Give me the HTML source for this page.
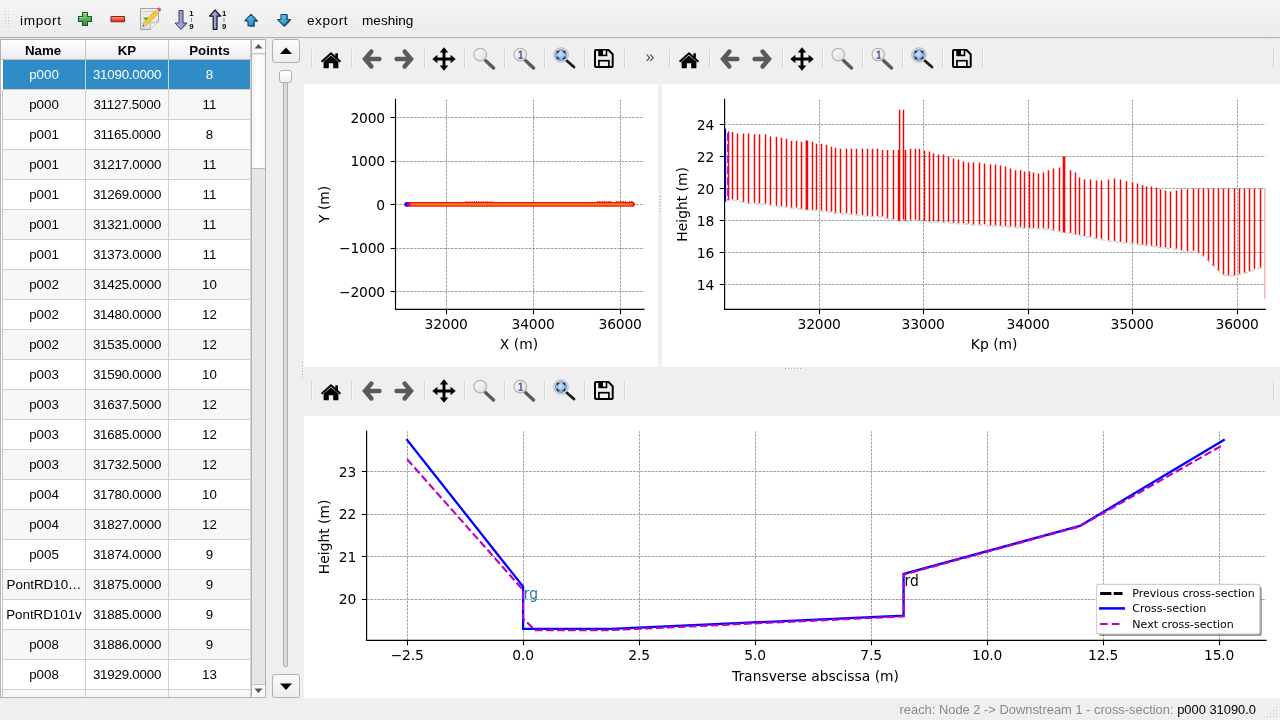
<!DOCTYPE html>
<html lang="en"><head><meta charset="utf-8"><title>Pamhyr2 - Geometry</title>
<style>
*{box-sizing:border-box;margin:0;padding:0}
html,body{width:1280px;height:720px;overflow:hidden;background:#efefef;font-family:"Liberation Sans",sans-serif;font-size:13.33px;color:#000}
body{position:relative;will-change:transform}
.abs{position:absolute}
.topbar{position:absolute;left:0;top:0;width:1280px;height:38px;background:linear-gradient(#f5f5f5,#ececec);border-bottom:1px solid #b4b4b4}
.topline{position:absolute;left:0;top:38px;width:1280px;height:1px;background:#e4e4e4}
.topbar .lbl{position:absolute;top:1px;height:38px;line-height:40px;font-size:13.6px;letter-spacing:.3px;white-space:nowrap}
.tablewrap{position:absolute;left:0;top:39px;width:252px;height:659px;background:#fff;border:1px solid #b4b4b4;overflow:hidden}
.thead{position:absolute;left:0;top:0;width:250px;height:20px;background:linear-gradient(#ffffff,#ececec);border-bottom:1px solid #c0c0c0}
.th{position:absolute;top:0;height:19px;line-height:22px;text-align:center;font-weight:bold;font-size:13.3px;border-right:1px solid #c8c8c8}
.tr{position:absolute;left:2px;width:248px;height:30px;background:#fff;border-bottom:1px solid #d0d0d0}
.tr.alt{background:#f7f7f7}
.tr.sel{background:#308cc6;color:#fff}
.td{position:absolute;top:0;height:29px;line-height:30px;text-align:center;white-space:nowrap;border-right:1px solid #d0d0d0}
.c1{left:0;width:83px}.c2{left:83px;width:83px}.c3{left:166px;width:82px}
.status{position:absolute;left:0;top:699px;width:1256px;height:22px;line-height:22px;text-align:right;white-space:nowrap;font-size:12.9px}
.status .s1{color:#8a8a8a}
.canvas{position:absolute;background:#fff}
svg text{font-family:"DejaVu Sans",sans-serif;font-size:13.89px;fill:#000}
svg text.tk{letter-spacing:-.2px}
.leftline{position:absolute;left:1px;top:50px;width:1px;height:610px;background:#c6c6c6}
.td.c2{letter-spacing:-.22px}

</style></head>
<body>
<div class="topbar">
<svg class="abs" style="left:3px;top:9px" width="8" height="20" viewBox="0 0 8 20"><g fill="#c4c4c4"><rect x="2" y="2" width="1" height="1"/><rect x="5" y="2" width="1" height="1"/><rect x="2" y="5" width="1" height="1"/><rect x="5" y="5" width="1" height="1"/><rect x="2" y="8" width="1" height="1"/><rect x="5" y="8" width="1" height="1"/><rect x="2" y="11" width="1" height="1"/><rect x="5" y="11" width="1" height="1"/><rect x="2" y="14" width="1" height="1"/><rect x="5" y="14" width="1" height="1"/><rect x="2" y="17" width="1" height="1"/><rect x="5" y="17" width="1" height="1"/></g></svg>
<div class="lbl" style="left:20px;letter-spacing:.65px">import</div>
<!-- plus -->
<svg class="abs" style="left:77px;top:11px" width="16" height="16" viewBox="0 0 16 16"><defs><linearGradient id="gp" x1="0" y1="0" x2="0" y2="1"><stop offset="0" stop-color="#8fd08f"/><stop offset="1" stop-color="#2f8a36"/></linearGradient></defs><path d="M5.500 1.500h5V5.500h4v5h-4v4h-5v-4h-4v-5h4z" fill="url(#gp)" stroke="#1f5a24" stroke-width="1.100" stroke-linejoin="round"/><path d="M6.600 2.600h2.800M2.600 6.600h2.900" stroke="#c8ecc8" stroke-width="1" fill="none" opacity=".8"/></svg>
<!-- minus -->
<svg class="abs" style="left:110px;top:15px" width="16" height="8" viewBox="0 0 16 8"><defs><linearGradient id="gm" x1="0" y1="0" x2="0" y2="1"><stop offset="0" stop-color="#ff9a7a"/><stop offset="1" stop-color="#e8201a"/></linearGradient></defs><rect x="1" y="1.500" width="13.500" height="5.200" rx=".500" fill="url(#gm)" stroke="#7a2a22" stroke-width="1.100"/></svg>
<!-- edit -->
<svg class="abs" style="left:139px;top:6px" width="24" height="25" viewBox="0 0 24 25"><defs><linearGradient id="gpap" x1="0" y1="0" x2="0" y2="1"><stop offset="0" stop-color="#f4f4f4"/><stop offset="1" stop-color="#dcdcdc"/></linearGradient></defs><path d="M1.500 2.500h18v13l-8.500 8h-9.500z" fill="url(#gpap)" stroke="#a2a2a2" stroke-width="1"/><path d="M11 23.500c1-2.500 1-5 .3-7.200c2.500 1 5.500.8 8.200-.8" fill="#fbfbfb" stroke="#a8a8a8" stroke-width=".8"/><rect x="3.500" y="4.600" width="12" height="1.800" fill="#f1cabb"/><rect x="3.500" y="8" width="13" height="1.200" fill="#e2e2e2"/><path d="M4 11.500h5l-1 4z" fill="#4c9a3c"/><rect x="3.500" y="16.500" width="6" height="1.200" fill="#d4d4d4"/><path d="M3.600 20.400l1.500-4.300L16.700 4.400l2.700 2.700L7.800 18.800z" fill="#f3cf2c" stroke="#c49a14" stroke-width=".7"/><path d="M16.700 4.400l1.200-1.200 2.700 2.700-1.200 1.200z" fill="#d8d8d8"/><path d="M3.600 20.400l1.500-4.300 2.700 2.700z" fill="#e9c9a4"/><path d="M3.600 20.400l.6-1.700 1.100 1.100z" fill="#444"/><path d="M17.900 3.200l.9-.9a1.900 1.900 0 0 1 2.700 2.700l-.9.900z" fill="#ec5050"/></svg>
<!-- sort desc -->
<svg class="abs" style="left:173px;top:8px" width="24" height="24" viewBox="0 0 24 24"><defs><linearGradient id="gs" x1="0" y1="0" x2="1" y2="0"><stop offset="0" stop-color="#b8bce4"/><stop offset="1" stop-color="#7c82c0"/></linearGradient></defs><path d="M6 2.500h4v12.500h4l-6 6.500-6-6.500h4z" fill="url(#gs)" stroke="#3c3e5c" stroke-width="1" stroke-linejoin="round"/><text x="16.300" y="7.900" style="font:bold 7.8px 'Liberation Sans',sans-serif" fill="#111">1</text><rect x="18" y="10.500" width="1" height="1" fill="#222"/><rect x="18" y="12.500" width="1" height="1" fill="#222"/><text x="16.300" y="21" style="font:bold 7.8px 'Liberation Sans',sans-serif" fill="#111">9</text></svg>
<!-- sort asc -->
<svg class="abs" style="left:207px;top:8px" width="24" height="24" viewBox="0 0 24 24"><path d="M6.200 21.300h3.800V8.200h3.600L8.100 2 2.600 8.200h3.600z" fill="url(#gs)" stroke="#14162c" stroke-width="1.200" stroke-linejoin="round"/><text x="14.900" y="7.900" style="font:bold 7.800px 'Liberation Sans',sans-serif" fill="#111">1</text><rect x="16.500" y="10.500" width="1" height="1" fill="#222"/><rect x="16.500" y="12.500" width="1" height="1" fill="#222"/><text x="14.900" y="21" style="font:bold 7.800px 'Liberation Sans',sans-serif" fill="#111">9</text></svg>
<!-- up -->
<svg class="abs" style="left:243px;top:12px" width="17" height="16" viewBox="0 0 17 16"><defs><linearGradient id="gu" x1="0" y1="0" x2="1" y2="1"><stop offset="0" stop-color="#7fd4f4"/><stop offset="1" stop-color="#1478b8"/></linearGradient></defs><path d="M9 3.300l6.500 6.700H12v5H6v-5H2.500z" fill="#222" opacity=".55"/><path d="M8 2.300l6.300 6.500H11v5H5v-5H1.700z" fill="url(#gu)" stroke="#0c4a78" stroke-width="1.100" stroke-linejoin="round"/></svg>
<!-- down -->
<svg class="abs" style="left:276px;top:12px" width="17" height="16" viewBox="0 0 17 16"><path d="M9 15l6.500-6.700H12v-5H6v5H2.500z" fill="#222" opacity=".55"/><path d="M8 14l6.300-6.500H11v-5H5v5H1.700z" fill="url(#gu)" stroke="#0c4a78" stroke-width="1.100" stroke-linejoin="round"/></svg>
<div class="lbl" style="left:307px;letter-spacing:.55px">export</div>
<div class="lbl" style="left:362px;letter-spacing:0">meshing</div>
</div>
<div class="topline"></div>
<div class="tablewrap">
<div class="thead"><div class="th" style="left:0;width:85px">Name</div><div class="th" style="left:85px;width:83px">KP</div><div class="th" style="left:168px;width:82px">Points</div></div>
<div class="tr sel" style="top:20px"><div class="td c1">p000</div><div class="td c2">31090.0000</div><div class="td c3">8</div></div>
<div class="tr alt" style="top:50px"><div class="td c1">p000</div><div class="td c2">31127.5000</div><div class="td c3">11</div></div>
<div class="tr" style="top:80px"><div class="td c1">p001</div><div class="td c2">31165.0000</div><div class="td c3">8</div></div>
<div class="tr alt" style="top:110px"><div class="td c1">p001</div><div class="td c2">31217.0000</div><div class="td c3">11</div></div>
<div class="tr" style="top:140px"><div class="td c1">p001</div><div class="td c2">31269.0000</div><div class="td c3">11</div></div>
<div class="tr alt" style="top:170px"><div class="td c1">p001</div><div class="td c2">31321.0000</div><div class="td c3">11</div></div>
<div class="tr" style="top:200px"><div class="td c1">p001</div><div class="td c2">31373.0000</div><div class="td c3">11</div></div>
<div class="tr alt" style="top:230px"><div class="td c1">p002</div><div class="td c2">31425.0000</div><div class="td c3">10</div></div>
<div class="tr" style="top:260px"><div class="td c1">p002</div><div class="td c2">31480.0000</div><div class="td c3">12</div></div>
<div class="tr alt" style="top:290px"><div class="td c1">p002</div><div class="td c2">31535.0000</div><div class="td c3">12</div></div>
<div class="tr" style="top:320px"><div class="td c1">p003</div><div class="td c2">31590.0000</div><div class="td c3">10</div></div>
<div class="tr alt" style="top:350px"><div class="td c1">p003</div><div class="td c2">31637.5000</div><div class="td c3">12</div></div>
<div class="tr" style="top:380px"><div class="td c1">p003</div><div class="td c2">31685.0000</div><div class="td c3">12</div></div>
<div class="tr alt" style="top:410px"><div class="td c1">p003</div><div class="td c2">31732.5000</div><div class="td c3">12</div></div>
<div class="tr" style="top:440px"><div class="td c1">p004</div><div class="td c2">31780.0000</div><div class="td c3">10</div></div>
<div class="tr alt" style="top:470px"><div class="td c1">p004</div><div class="td c2">31827.0000</div><div class="td c3">12</div></div>
<div class="tr" style="top:500px"><div class="td c1">p005</div><div class="td c2">31874.0000</div><div class="td c3">9</div></div>
<div class="tr alt" style="top:530px"><div class="td c1">PontRD10…</div><div class="td c2">31875.0000</div><div class="td c3">9</div></div>
<div class="tr" style="top:560px"><div class="td c1">PontRD101v</div><div class="td c2">31885.0000</div><div class="td c3">9</div></div>
<div class="tr alt" style="top:590px"><div class="td c1">p008</div><div class="td c2">31886.0000</div><div class="td c3">9</div></div>
<div class="tr" style="top:620px"><div class="td c1">p008</div><div class="td c2">31929.0000</div><div class="td c3">13</div></div>
<div class="tr alt" style="top:650px"><div class="td c1">p009</div><div class="td c2">31972.0000</div><div class="td c3">13</div></div>
<div class="leftline"></div>
</div>
<svg width="0" height="0" style="position:absolute"><defs>
<linearGradient id="lens" x1="0" y1="0" x2="1" y2="1"><stop offset="0" stop-color="#ffffff"/><stop offset="1" stop-color="#dcdcdc"/></linearGradient>
<linearGradient id="hnd" x1="0" y1="0" x2="1" y2="0"><stop offset="0" stop-color="#8a8a8a"/><stop offset="1" stop-color="#3a3a3a"/></linearGradient>
<radialGradient id="lensb" cx=".45" cy=".4" r=".7"><stop offset="0" stop-color="#cfe2f6"/><stop offset="1" stop-color="#6f9fd8"/></radialGradient>
<symbol id="i-home" viewBox="0 0 24 24"><path d="M12 7.600l7.400 6.200V20.200H14.200V15.300H9.800V20.200H4.600V13.800z" fill="#000"/><path d="M2.600 13.800L12 5.300l9.400 8.500" fill="none" stroke="#000" stroke-width="2.100" stroke-linejoin="miter"/><rect x="16.300" y="5.300" width="2.600" height="5.500" fill="#000"/></symbol>
<symbol id="i-back" viewBox="0 0 24 24"><path d="M11.400 4.500L5 12l6.400 7.500M6 12H19.400" fill="none" stroke="#5a5a5a" stroke-width="4.400" stroke-linecap="round" stroke-linejoin="miter"/></symbol>
<symbol id="i-fwd" viewBox="0 0 24 24"><path d="M12.600 4.500L19 12l-6.400 7.500M18 12H4.600" fill="none" stroke="#5a5a5a" stroke-width="4.400" stroke-linecap="round" stroke-linejoin="miter"/></symbol>
<symbol id="i-move" viewBox="0 0 24 24"><path d="M12 2.500V21.500M2.500 12H21.500" stroke="#000" stroke-width="2.900" fill="none"/><path d="M12 .300l4.300 5.100H7.700zM12 23.700l4.300-5.100H7.700zM.300 12l5.100-4.300v8.600zM23.700 12l-5.100-4.300v8.600z" fill="#000"/></symbol>
<symbol id="i-zoom" viewBox="0 0 24 24"><path d="M13.500 13.500L21.500 21" stroke="#4c4c4c" stroke-width="3.400" stroke-linecap="round" opacity=".9"/><circle cx="8.300" cy="7.600" r="6.300" fill="url(#lens)" stroke="#b4b4b4" stroke-width="1.300"/></symbol>
<symbol id="i-zoom1" viewBox="0 0 24 24"><path d="M13.500 13.500L21.500 21" stroke="#4c4c4c" stroke-width="3.400" stroke-linecap="round" opacity=".9"/><circle cx="8.300" cy="7.600" r="6.300" fill="url(#lens)" stroke="#b4b4b4" stroke-width="1.300"/><path d="M6.600 5.300l2.400-.9v6.700M6.600 11.200h4" stroke="#5c5ca8" stroke-width="1.500" fill="none"/></symbol>
<symbol id="i-zoomf" viewBox="0 0 24 24"><path d="M14.500 13.500L22 20" stroke="#1a1a1a" stroke-width="2.800" stroke-linecap="round"/><circle cx="9" cy="8" r="7.200" fill="#f4f4f4" stroke="#b0b0b0" stroke-width="1"/><circle cx="9" cy="8" r="5.600" fill="url(#lensb)" stroke="#5c8cd0" stroke-width=".8"/><path d="M5.300 6.600V4.400h2.200M10.500 4.400h2.200v2.200M12.700 9.400v2.200h-2.200M7.500 11.600H5.300V9.400" stroke="#2c3c5c" stroke-width="1.500" fill="none"/></symbol>
<symbol id="i-save" viewBox="0 0 24 24"><path d="M3 4a1 1 0 0 1 1-1H16.500l4.200 4.200V19a1 1 0 0 1-1 1H4a1 1 0 0 1-1-1z" fill="none" stroke="#000" stroke-width="2" stroke-linejoin="round"/><path d="M6.300 2.600h9v6.600h-9z" fill="#000"/><rect x="11" y="3.500" width="2.700" height="4.100" fill="#efefef"/><rect x="6.900" y="13.700" width="10" height="6.300" fill="none" stroke="#000" stroke-width="1.700"/></symbol>
</defs></svg>
<div class="abs" style="left:251px;top:39px;width:15px;height:659px;background:#e6e6e6;border:1px solid #b4b4b4"></div>
<div class="abs" style="left:252px;top:40px;width:13px;height:14px;background:#fafafa;border-bottom:1px solid #c4c4c4"></div>
<svg class="abs" style="left:254px;top:43px" width="9" height="6" viewBox="0 0 9 6"><path d="M0.500 5.500L4.500 1l4 4.500z" fill="#555"/></svg>
<div class="abs" style="left:252px;top:55px;width:13px;height:114px;background:linear-gradient(90deg,#f2f2f2,#ffffff 40%,#f6f6f6);border-bottom:1px solid #b8b8b8"></div>
<div class="abs" style="left:252px;top:684px;width:13px;height:13px;background:#fafafa;border-top:1px solid #c4c4c4"></div>
<svg class="abs" style="left:254px;top:688px" width="9" height="6" viewBox="0 0 9 6"><path d="M0.500 .500L4.500 5l4-4.500z" fill="#555"/></svg>
<div class="abs" style="left:272px;top:39px;width:28px;height:24px;border:1px solid #b2b2b2;border-radius:3px;background:linear-gradient(#fbfbfb,#ececec)"></div>
<svg class="abs" style="left:280px;top:47px" width="12" height="8" viewBox="0 0 12 8"><path d="M0 7L6 .500 12 7z" fill="#000"/></svg>
<div class="abs" style="left:283px;top:76px;width:5px;height:591px;border:1px solid #b0b0b0;border-radius:2px;background:#dadada"></div>
<div class="abs" style="left:279px;top:70px;width:13px;height:13px;border:1px solid #b0b0b0;border-radius:3px;background:linear-gradient(#ffffff,#f0f0f0)"></div>
<div class="abs" style="left:272px;top:674px;width:28px;height:24px;border:1px solid #b2b2b2;border-radius:3px;background:linear-gradient(#fbfbfb,#ececec)"></div>
<svg class="abs" style="left:280px;top:683px" width="12" height="8" viewBox="0 0 12 8"><path d="M0 .500L6 7 12 .500z" fill="#000"/></svg>
<svg class="abs" style="left:0;top:0;pointer-events:none" width="1280" height="720" viewBox="0 0 1280 720" shape-rendering="crispEdges"><rect x="303" y="363" width="1" height="1" fill="#fbfbfb"/><rect x="302" y="362" width="1" height="1" fill="#aeaeae"/><rect x="303" y="366" width="1" height="1" fill="#fbfbfb"/><rect x="302" y="365" width="1" height="1" fill="#aeaeae"/><rect x="303" y="369" width="1" height="1" fill="#fbfbfb"/><rect x="302" y="368" width="1" height="1" fill="#aeaeae"/><rect x="303" y="372" width="1" height="1" fill="#fbfbfb"/><rect x="302" y="371" width="1" height="1" fill="#aeaeae"/><rect x="303" y="375" width="1" height="1" fill="#fbfbfb"/><rect x="302" y="374" width="1" height="1" fill="#aeaeae"/><rect x="303" y="378" width="1" height="1" fill="#fbfbfb"/><rect x="302" y="377" width="1" height="1" fill="#aeaeae"/><rect x="661" y="197" width="1" height="1" fill="#fbfbfb"/><rect x="660" y="196" width="1" height="1" fill="#aeaeae"/><rect x="661" y="200" width="1" height="1" fill="#fbfbfb"/><rect x="660" y="199" width="1" height="1" fill="#aeaeae"/><rect x="661" y="203" width="1" height="1" fill="#fbfbfb"/><rect x="660" y="202" width="1" height="1" fill="#aeaeae"/><rect x="661" y="206" width="1" height="1" fill="#fbfbfb"/><rect x="660" y="205" width="1" height="1" fill="#aeaeae"/><rect x="661" y="209" width="1" height="1" fill="#fbfbfb"/><rect x="660" y="208" width="1" height="1" fill="#aeaeae"/><rect x="661" y="212" width="1" height="1" fill="#fbfbfb"/><rect x="660" y="211" width="1" height="1" fill="#aeaeae"/><rect x="786" y="369" width="1" height="1" fill="#fbfbfb"/><rect x="785" y="368" width="1" height="1" fill="#aeaeae"/><rect x="789" y="369" width="1" height="1" fill="#fbfbfb"/><rect x="788" y="368" width="1" height="1" fill="#aeaeae"/><rect x="792" y="369" width="1" height="1" fill="#fbfbfb"/><rect x="791" y="368" width="1" height="1" fill="#aeaeae"/><rect x="795" y="369" width="1" height="1" fill="#fbfbfb"/><rect x="794" y="368" width="1" height="1" fill="#aeaeae"/><rect x="798" y="369" width="1" height="1" fill="#fbfbfb"/><rect x="797" y="368" width="1" height="1" fill="#aeaeae"/><rect x="801" y="369" width="1" height="1" fill="#fbfbfb"/><rect x="800" y="368" width="1" height="1" fill="#aeaeae"/></svg>
<div class="abs" style="left:311px;top:49px;width:1px;height:19px;background:#d6d6d6"></div><div class="abs" style="left:312px;top:49px;width:1px;height:19px;background:#f8f8f8"></div>
<div class="abs" style="left:351px;top:49px;width:1px;height:19px;background:#d6d6d6"></div><div class="abs" style="left:352px;top:49px;width:1px;height:19px;background:#f8f8f8"></div>
<div class="abs" style="left:424px;top:49px;width:1px;height:19px;background:#d6d6d6"></div><div class="abs" style="left:425px;top:49px;width:1px;height:19px;background:#f8f8f8"></div>
<div class="abs" style="left:464px;top:49px;width:1px;height:19px;background:#d6d6d6"></div><div class="abs" style="left:465px;top:49px;width:1px;height:19px;background:#f8f8f8"></div>
<div class="abs" style="left:504px;top:49px;width:1px;height:19px;background:#d6d6d6"></div><div class="abs" style="left:505px;top:49px;width:1px;height:19px;background:#f8f8f8"></div>
<div class="abs" style="left:544px;top:49px;width:1px;height:19px;background:#d6d6d6"></div><div class="abs" style="left:545px;top:49px;width:1px;height:19px;background:#f8f8f8"></div>
<div class="abs" style="left:584px;top:49px;width:1px;height:19px;background:#d6d6d6"></div><div class="abs" style="left:585px;top:49px;width:1px;height:19px;background:#f8f8f8"></div>
<div class="abs" style="left:624px;top:49px;width:1px;height:19px;background:#d6d6d6"></div><div class="abs" style="left:625px;top:49px;width:1px;height:19px;background:#f8f8f8"></div>
<svg class="abs" style="left:319.2px;top:47.7px" width="24" height="24"><use href="#i-home"/></svg>
<svg class="abs" style="left:359.5px;top:47px" width="24" height="24"><use href="#i-back"/></svg>
<svg class="abs" style="left:391.5px;top:47px" width="24" height="24"><use href="#i-fwd"/></svg>
<svg class="abs" style="left:432px;top:47px" width="24" height="24"><use href="#i-move"/></svg>
<svg class="abs" style="left:472px;top:47px" width="24" height="24"><use href="#i-zoom"/></svg>
<svg class="abs" style="left:512px;top:47px" width="24" height="24"><use href="#i-zoom1"/></svg>
<svg class="abs" style="left:552px;top:47px" width="24" height="24"><use href="#i-zoomf"/></svg>
<svg class="abs" style="left:592px;top:47px" width="24" height="24"><use href="#i-save"/></svg>
<div class="abs" style="left:642px;top:48.3px;width:16px;height:18px;line-height:18px;font-size:16px;color:#505050;text-align:center">»</div>
<div class="abs" style="left:669px;top:49px;width:1px;height:19px;background:#d6d6d6"></div><div class="abs" style="left:670px;top:49px;width:1px;height:19px;background:#f8f8f8"></div>
<div class="abs" style="left:709px;top:49px;width:1px;height:19px;background:#d6d6d6"></div><div class="abs" style="left:710px;top:49px;width:1px;height:19px;background:#f8f8f8"></div>
<div class="abs" style="left:782px;top:49px;width:1px;height:19px;background:#d6d6d6"></div><div class="abs" style="left:783px;top:49px;width:1px;height:19px;background:#f8f8f8"></div>
<div class="abs" style="left:822px;top:49px;width:1px;height:19px;background:#d6d6d6"></div><div class="abs" style="left:823px;top:49px;width:1px;height:19px;background:#f8f8f8"></div>
<div class="abs" style="left:862px;top:49px;width:1px;height:19px;background:#d6d6d6"></div><div class="abs" style="left:863px;top:49px;width:1px;height:19px;background:#f8f8f8"></div>
<div class="abs" style="left:902px;top:49px;width:1px;height:19px;background:#d6d6d6"></div><div class="abs" style="left:903px;top:49px;width:1px;height:19px;background:#f8f8f8"></div>
<div class="abs" style="left:942px;top:49px;width:1px;height:19px;background:#d6d6d6"></div><div class="abs" style="left:943px;top:49px;width:1px;height:19px;background:#f8f8f8"></div>
<div class="abs" style="left:982px;top:49px;width:1px;height:19px;background:#d6d6d6"></div><div class="abs" style="left:983px;top:49px;width:1px;height:19px;background:#f8f8f8"></div>
<div class="abs" style="left:1273px;top:49px;width:1px;height:19px;background:#d6d6d6"></div><div class="abs" style="left:1274px;top:49px;width:1px;height:19px;background:#f8f8f8"></div>
<svg class="abs" style="left:677.2px;top:47.7px" width="24" height="24"><use href="#i-home"/></svg>
<svg class="abs" style="left:717.5px;top:47px" width="24" height="24"><use href="#i-back"/></svg>
<svg class="abs" style="left:749.5px;top:47px" width="24" height="24"><use href="#i-fwd"/></svg>
<svg class="abs" style="left:790px;top:47px" width="24" height="24"><use href="#i-move"/></svg>
<svg class="abs" style="left:830px;top:47px" width="24" height="24"><use href="#i-zoom"/></svg>
<svg class="abs" style="left:870px;top:47px" width="24" height="24"><use href="#i-zoom1"/></svg>
<svg class="abs" style="left:910px;top:47px" width="24" height="24"><use href="#i-zoomf"/></svg>
<svg class="abs" style="left:950px;top:47px" width="24" height="24"><use href="#i-save"/></svg>
<div class="abs" style="left:311px;top:381px;width:1px;height:19px;background:#d6d6d6"></div><div class="abs" style="left:312px;top:381px;width:1px;height:19px;background:#f8f8f8"></div>
<div class="abs" style="left:351px;top:381px;width:1px;height:19px;background:#d6d6d6"></div><div class="abs" style="left:352px;top:381px;width:1px;height:19px;background:#f8f8f8"></div>
<div class="abs" style="left:424px;top:381px;width:1px;height:19px;background:#d6d6d6"></div><div class="abs" style="left:425px;top:381px;width:1px;height:19px;background:#f8f8f8"></div>
<div class="abs" style="left:464px;top:381px;width:1px;height:19px;background:#d6d6d6"></div><div class="abs" style="left:465px;top:381px;width:1px;height:19px;background:#f8f8f8"></div>
<div class="abs" style="left:504px;top:381px;width:1px;height:19px;background:#d6d6d6"></div><div class="abs" style="left:505px;top:381px;width:1px;height:19px;background:#f8f8f8"></div>
<div class="abs" style="left:544px;top:381px;width:1px;height:19px;background:#d6d6d6"></div><div class="abs" style="left:545px;top:381px;width:1px;height:19px;background:#f8f8f8"></div>
<div class="abs" style="left:584px;top:381px;width:1px;height:19px;background:#d6d6d6"></div><div class="abs" style="left:585px;top:381px;width:1px;height:19px;background:#f8f8f8"></div>
<div class="abs" style="left:624px;top:381px;width:1px;height:19px;background:#d6d6d6"></div><div class="abs" style="left:625px;top:381px;width:1px;height:19px;background:#f8f8f8"></div>
<div class="abs" style="left:1273px;top:381px;width:1px;height:19px;background:#d6d6d6"></div><div class="abs" style="left:1274px;top:381px;width:1px;height:19px;background:#f8f8f8"></div>
<svg class="abs" style="left:319.2px;top:379.7px" width="24" height="24"><use href="#i-home"/></svg>
<svg class="abs" style="left:359.5px;top:379px" width="24" height="24"><use href="#i-back"/></svg>
<svg class="abs" style="left:391.5px;top:379px" width="24" height="24"><use href="#i-fwd"/></svg>
<svg class="abs" style="left:432px;top:379px" width="24" height="24"><use href="#i-move"/></svg>
<svg class="abs" style="left:472px;top:379px" width="24" height="24"><use href="#i-zoom"/></svg>
<svg class="abs" style="left:512px;top:379px" width="24" height="24"><use href="#i-zoom1"/></svg>
<svg class="abs" style="left:552px;top:379px" width="24" height="24"><use href="#i-zoomf"/></svg>
<svg class="abs" style="left:592px;top:379px" width="24" height="24"><use href="#i-save"/></svg>
<svg class="canvas" style="left:304px;top:84px" width="354" height="283" viewBox="304 84 354 283">
<path d="M446.5 309.3V99.4M533.5 309.3V99.4M620.5 309.3V99.4M395.5 117.5H644M395.5 161.5H644M395.5 204.5H644M395.5 248.5H644M395.5 291.5H644" fill="none" stroke="#808080" stroke-width=".75" stroke-dasharray="2.6 1.1"/>
<path d="M408 204.400H632.600" stroke="#ff0000" stroke-width="4.700" stroke-linecap="round" fill="none"/>
<path d="M465 201.800H493M597 201.600H612M616 201.600H626M629 201.700H633" stroke="#ff0000" stroke-width="1.200" stroke-dasharray="1.300 .900" fill="none"/>
<path d="M408 201.950H632M408 206.850H632" stroke="#fff" stroke-width=".500" stroke-dasharray=".700 .900" opacity=".55" fill="none"/>
<circle cx="406.600" cy="204.400" r="2.300" fill="#0000ff"/>
<circle cx="408.900" cy="204.400" r="2" fill="#bf00bf"/>
<path d="M410.800 204.400H632.800" stroke="#ee8a1e" stroke-width="2.400" fill="none"/>
<path d="M446.5 309.3v4.9M533.5 309.3v4.9M620.5 309.3v4.9M395.5 117.5h-4.9M395.5 161.5h-4.9M395.5 204.5h-4.9M395.5 248.5h-4.9M395.5 291.5h-4.9" stroke="#000" stroke-width="1.1" fill="none"/>
<path d="M395.5 99.4V309.3H644" stroke="#000" stroke-width="1.15" fill="none" stroke-linecap="square"/>
<text class="tk" x="446.1" y="328.6" text-anchor="middle">32000</text>
<text class="tk" x="533.1" y="328.6" text-anchor="middle">34000</text>
<text class="tk" x="620.1" y="328.6" text-anchor="middle">36000</text>
<text class="tk" x="385" y="122.7" text-anchor="end">2000</text>
<text class="tk" x="385" y="165.9" text-anchor="end">1000</text>
<text class="tk" x="385" y="209.7" text-anchor="end">0</text>
<text class="tk" x="385" y="253.1" text-anchor="end">−1000</text>
<text class="tk" x="385" y="296.7" text-anchor="end">−2000</text>
<text x="518.95" y="349.400" text-anchor="middle">X (m)</text>
<text transform="translate(328.700 204.35) rotate(-90)" text-anchor="middle">Y (m)</text>
</svg>
<svg class="canvas" style="left:662px;top:84px" width="618" height="283" viewBox="662 84 618 283">
<path d="M819.5 309.3V99.4M923.5 309.3V99.4M1028.5 309.3V99.4M1132.5 309.3V99.4M1237.5 309.3V99.4M724.6 124.5H1265.4M724.6 156.5H1265.4M724.6 188.5H1265.4M724.6 220.5H1265.4M724.6 252.5H1265.4M724.6 284.5H1265.4" fill="none" stroke="#808080" stroke-width=".75" stroke-dasharray="2.6 1.1"/>
<polyline points="725.4,202.04 728.5,200.6 732.5,199.96 737.5,200.6 743.5,202.51 748.5,203.47 754.5,203.47 759.5,204.27 765.5,204.27 770.5,205.39 776.5,206.19 781.5,206.83 786.5,207.15 791.5,208.1 796.5,208.26 801.5,209.54 812.5,210.34 816.5,210.5 821.5,211.14 826.5,211.62 831.5,212.26 835.5,213.37 840.5,213.69 846.5,214.01 851.5,214.33 856.5,214.97 862.5,215.61 867.5,216.57 872.5,216.73 877.5,216.73 882.5,217.21 887.5,218.8 893.5,219.6 898.5,221.36 899.6,221.36 903.5,220.08 905.5,221.36 910.5,220.4 915.5,220.4 919.5,221.04 924.5,221.68 929.5,221.84 933.5,222 938.5,222.16 943.5,222.48 948.5,222.64 953.5,223.44 958.5,223.75 963.5,223.75 968.5,224.23 973.5,225.03 979.5,225.03 984.5,225.03 990.5,226.31 995.5,225.83 1000.5,226.31 1005.5,226.95 1010.5,226.95 1015.5,227.43 1020.5,227.91 1024.5,228.23 1029.5,228.39 1033.5,228.71 1038.5,228.71 1043.5,228.71 1048.5,229.18 1053.5,230.46 1059.5,231.58 1070.5,233.82 1075.5,234.61 1079.5,235.41 1084.5,236.69 1090.5,237.17 1096.5,238.77 1101.5,239.57 1108.5,240.84 1114.5,241.8 1120.5,242.76 1126.5,243.08 1132.5,243.72 1137.5,244.52 1142.5,245.47 1146.5,245.47 1151.5,246.27 1156.5,246.91 1160.5,247.71 1165.5,248.03 1170.5,248.67 1176.5,249.31 1181.5,250.58 1187.5,251.86 1193.5,251.54 1198.5,253.3 1203.5,256.17 1208.5,261.12 1213.5,266.08 1218.5,271.03 1223.5,274.86 1228.5,276.14 1234.5,276.14 1239.5,274.38 1244.5,273.26 1249.5,271.98 1254.5,269.43 1260.5,267.99 1264.8,267.35" fill="none" stroke="#d3d3d3" stroke-width="1.400" stroke-dasharray="5.100 2.200"/>
<path d="M728.5 131.23V199.9M732.5 132.03V199.26M737.5 133.46V199.9M743.5 133.46V201.81M748.5 133.46V202.77M754.5 134.26V202.77M759.5 134.26V203.57M765.5 134.26V203.57M770.5 136.5V204.69M776.5 136.82V205.49M781.5 137.78V206.13M786.5 138.73V206.45M791.5 140.65V207.4M796.5 140.65V207.56M801.5 141.77V208.84M812.5 141.77V209.64M816.5 143.68V209.8M821.5 143.68V210.44M826.5 144.64V210.92M831.5 146.72V211.56M835.5 147.68V212.67M840.5 148.79V212.99M846.5 148.79V213.31M851.5 148.79V213.63M856.5 148.79V214.27M862.5 148.79V214.91M867.5 148.79V215.87M872.5 148.79V216.03M877.5 148.79V216.03M882.5 149.91V216.51M887.5 149.91V218.1M893.5 149.91V218.9M898.5 149.91V220.66M899.6 109.67V220.66M903.5 109.67V219.38M905.5 149.91V220.66M910.5 148.79V219.7M915.5 148.79V219.7M919.5 148.79V220.34M924.5 150.39V220.98M929.5 151.51V221.14M933.5 153.43V221.3M938.5 154.46V221.46M943.5 154.46V221.78M948.5 156.46V221.94M953.5 158.46V222.74M958.5 159.49V223.05M963.5 161.41V223.05M968.5 162.45V223.53M973.5 162.45V224.33M979.5 162.45V224.33M984.5 163.49V224.33M990.5 164.44V225.61M995.5 164.44V225.13M1000.5 165.4V225.61M1005.5 166.44V226.25M1010.5 168.44V226.25M1015.5 170.35V226.73M1020.5 170.35V227.21M1024.5 171.47V227.53M1029.5 171.47V227.69M1033.5 172.43V228.01M1038.5 173.39V228.01M1043.5 172.43V228.01M1048.5 170.35V228.48M1053.5 168.44V229.76M1059.5 167.48V230.88M1070.5 170.35V233.12M1075.5 172.43V233.91M1079.5 177.38V234.71M1084.5 179.46V235.99M1090.5 179.46V236.47M1096.5 180.41V238.07M1101.5 180.41V238.87M1108.5 179.46V240.14M1114.5 178.42V241.1M1120.5 179.46V242.06M1126.5 181.37V242.38M1132.5 182.41V243.02M1137.5 183.45V243.82M1142.5 185.37V244.77M1146.5 186.4V244.77M1151.5 186.4V245.57M1156.5 187.44V246.21M1160.5 189.36V247.01M1165.5 190.4V247.33M1170.5 191.43V247.97M1176.5 190.4V248.61M1181.5 189.36V249.88M1187.5 189.36V251.16M1193.5 188.4V250.84M1198.5 188.4V252.6M1203.5 188.4V255.47M1208.5 188.4V260.42M1213.5 188.4V265.38M1218.5 188.4V270.33M1223.5 188.4V274.16M1228.5 188.4V275.44M1234.5 188.4V275.44M1239.5 188.4V273.68M1244.5 188.4V272.56M1249.5 188.4V271.28M1254.5 188.4V268.73M1260.5 188.4V267.29" stroke="#ff0000" stroke-width="1.450" fill="none"/>
<path d="M806.9 140.49V209.64" stroke="#ff0000" stroke-width="2.6" fill="none"/>
<path d="M1064 156.46V232.48" stroke="#ff0000" stroke-width="2.6" fill="none"/>
<path d="M1264.900 188.4V299.07" stroke="#ff7070" stroke-width=".800" fill="none"/>
<path d="M728.14 133.3V199.9" stroke="#bf00bf" stroke-width="2.100" stroke-dasharray="7.700 3.300" fill="none"/>
<path d="M725.42 128.51V201.34" stroke="#0000ff" stroke-width="1.400" fill="none"/>
<path d="M819.5 309.3v4.9M923.5 309.3v4.9M1028.5 309.3v4.9M1132.5 309.3v4.9M1237.5 309.3v4.9M724.6 124.5h-4.9M724.6 156.5h-4.9M724.6 188.5h-4.9M724.6 220.5h-4.9M724.6 252.5h-4.9M724.6 284.5h-4.9" stroke="#000" stroke-width="1.1" fill="none"/>
<path d="M724.6 99.4V309.3H1265.4" stroke="#000" stroke-width="1.15" fill="none" stroke-linecap="square"/>
<text class="tk" x="819.1" y="328.6" text-anchor="middle">32000</text>
<text class="tk" x="923.1" y="328.6" text-anchor="middle">33000</text>
<text class="tk" x="1028.1" y="328.6" text-anchor="middle">34000</text>
<text class="tk" x="1132.1" y="328.6" text-anchor="middle">35000</text>
<text class="tk" x="1237.1" y="328.6" text-anchor="middle">36000</text>
<text class="tk" x="714.1" y="129.7" text-anchor="end">24</text>
<text class="tk" x="714.1" y="161.7" text-anchor="end">22</text>
<text class="tk" x="714.1" y="193.7" text-anchor="end">20</text>
<text class="tk" x="714.1" y="225.7" text-anchor="end">18</text>
<text class="tk" x="714.1" y="257.7" text-anchor="end">16</text>
<text class="tk" x="714.1" y="289.7" text-anchor="end">14</text>
<text x="994.2" y="349.400" text-anchor="middle">Kp (m)</text>
<text transform="translate(686.700 204.35) rotate(-90)" text-anchor="middle">Height (m)</text>
</svg>
<svg class="canvas" style="left:304px;top:416px" width="976" height="282" viewBox="304 416 976 282">
<path d="M407.5 640.4V431.3M523.5 640.4V431.3M639.5 640.4V431.3M755.5 640.4V431.3M871.5 640.4V431.3M987.5 640.4V431.3M1103.5 640.4V431.3M1219.5 640.4V431.3M366.6 471.5H1266M366.6 514.5H1266M366.6 556.5H1266M366.6 599.5H1266" fill="none" stroke="#808080" stroke-width=".75" stroke-dasharray="2.6 1.1"/>
<polyline points="407.1,440.05 523.1,586.58 523.1,628.88 611.26,628.88 903.58,615.63 903.58,573.77 1079.9,525.92 1223.74,440.05" fill="none" stroke="#0000ff" stroke-width="2.300" stroke-linejoin="miter" stroke-linecap="square"/>
<polyline points="407.1,459.28 523.1,590 523.1,618.62 535.16,630.29 606.62,630.29 903.58,616.49 903.58,574.62 1079.9,526.35 1221.88,445.61" fill="none" stroke="#bf00bf" stroke-width="2.100" stroke-dasharray="7.700 3.300"/>
<text transform="translate(523.800 599.200) scale(1 1.2)" style="fill:#1f77b4">rg</text>
<text transform="translate(904.500 585.700) scale(1 1.2)">rd</text>
<path d="M407.5 640.4v4.9M523.5 640.4v4.9M639.5 640.4v4.9M755.5 640.4v4.9M871.5 640.4v4.9M987.5 640.4v4.9M1103.5 640.4v4.9M1219.5 640.4v4.9M366.6 471.5h-4.9M366.6 514.5h-4.9M366.6 556.5h-4.9M366.6 599.5h-4.9" stroke="#000" stroke-width="1.1" fill="none"/>
<path d="M366.6 431.3V640.4H1266" stroke="#000" stroke-width="1.15" fill="none" stroke-linecap="square"/>
<text class="tk" x="407.1" y="659.7" text-anchor="middle">−2.5</text>
<text class="tk" x="523.1" y="659.7" text-anchor="middle">0.0</text>
<text class="tk" x="639.1" y="659.7" text-anchor="middle">2.5</text>
<text class="tk" x="755.1" y="659.7" text-anchor="middle">5.0</text>
<text class="tk" x="871.1" y="659.7" text-anchor="middle">7.5</text>
<text class="tk" x="987.1" y="659.7" text-anchor="middle">10.0</text>
<text class="tk" x="1103.1" y="659.7" text-anchor="middle">12.5</text>
<text class="tk" x="1219.1" y="659.7" text-anchor="middle">15.0</text>
<text class="tk" x="356.1" y="476.7" text-anchor="end">23</text>
<text class="tk" x="356.1" y="519.4" text-anchor="end">22</text>
<text class="tk" x="356.1" y="561.7" text-anchor="end">21</text>
<text class="tk" x="356.1" y="603.9" text-anchor="end">20</text>
<text x="815.5" y="681.200" text-anchor="middle">Transverse abscissa (m)</text>
<text transform="translate(328.600 536.85) rotate(-90)" text-anchor="middle">Height (m)</text>
<rect x="1098.500" y="586.400" width="163.300" height="49.500" rx="2.500" fill="#000" opacity=".42"/>
<rect x="1096.500" y="584.400" width="163.300" height="49.500" rx="2.500" fill="#fff" stroke="#cfcfcf" stroke-width="1.100"/>
<path d="M1100.200 593.500h22.300" stroke="#000" stroke-width="3" stroke-dasharray="11.200 2.300" fill="none"/>
<path d="M1099 608.400h26" stroke="#0000ff" stroke-width="2.500" fill="none"/>
<path d="M1100 624h22.200" stroke="#bf00bf" stroke-width="2.100" stroke-dasharray="7.700 4.100" fill="none"/>
<text x="1132.300" y="596.6" style="font-size:11.040px">Previous cross-section</text>
<text x="1132.300" y="611.7" style="font-size:11.040px">Cross-section</text>
<text x="1132.300" y="627.6" style="font-size:11.040px">Next cross-section</text>
</svg>
<svg class="abs" style="left:1266px;top:706px" width="13" height="13" viewBox="0 0 13 13"><g fill="#bdbdbd"><rect x="10" y="1" width="1" height="1"/><rect x="7" y="4" width="1" height="1"/><rect x="10" y="4" width="1" height="1"/><rect x="4" y="7" width="1" height="1"/><rect x="7" y="7" width="1" height="1"/><rect x="10" y="7" width="1" height="1"/><rect x="1" y="10" width="1" height="1"/><rect x="4" y="10" width="1" height="1"/><rect x="7" y="10" width="1" height="1"/><rect x="10" y="10" width="1" height="1"/></g></svg>
<div class="status"><span class="s1">reach: Node 2 -&gt; Downstream 1 - cross-section:</span> <span class="s2">p000 31090.0</span></div>
</body></html>
